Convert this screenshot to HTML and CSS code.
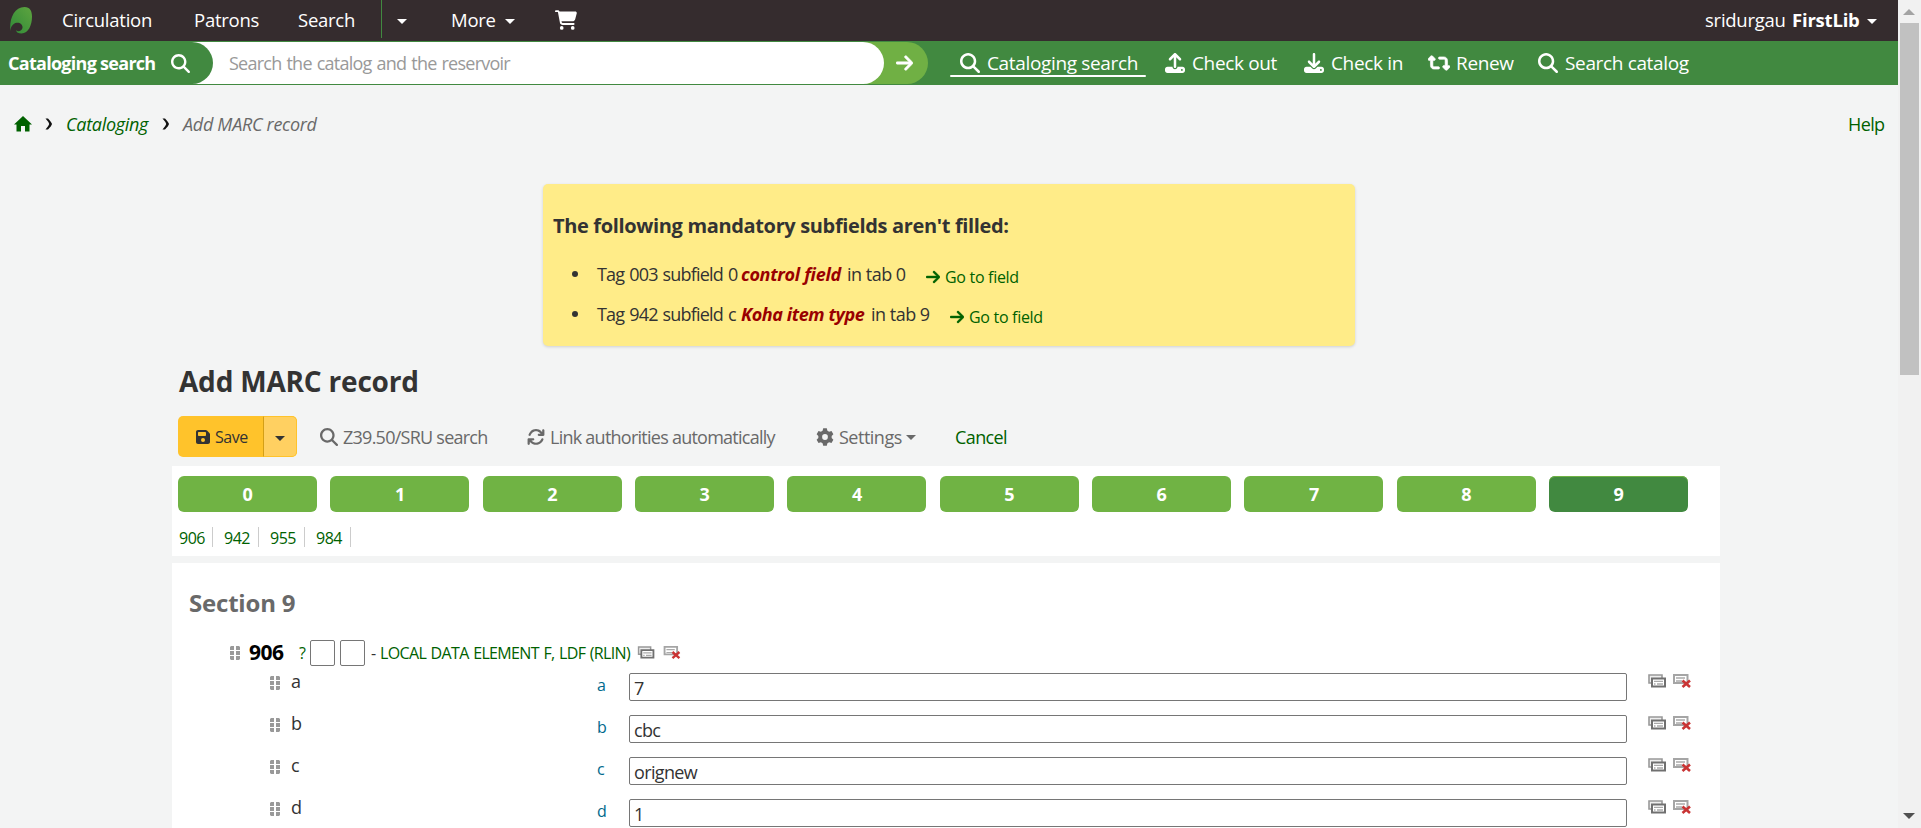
FILE: index.html
```html
<!DOCTYPE html>
<html lang="en">
<head>
<meta charset="utf-8">
<title>Add MARC record</title>
<link rel="stylesheet" href="styles.css">
</head>
<body>
<svg class="defs" aria-hidden="true">
  <symbol id="i-search" viewBox="0 0 512 512"><path d="M416 208c0 45.9-14.9 88.3-40 122.7L502.6 457.4c12.5 12.5 12.5 32.8 0 45.3s-32.8 12.5-45.3 0L330.7 376c-34.4 25.2-76.8 40-122.7 40C93.1 416 0 322.9 0 208S93.1 0 208 0S416 93.1 416 208zM208 352a144 144 0 1 0 0-288 144 144 0 1 0 0 288z"/></symbol>
  <symbol id="i-arrow" viewBox="0 0 448 512"><path stroke="currentColor" stroke-width="14" d="M438.600 278.600c12.500-12.500 12.500-32.800 0-45.300l-160-160c-12.500-12.500-32.800-12.500-45.300 0s-12.500 32.800 0 45.300L338.800 224 32 224c-17.700 0-32 14.300-32 32s14.300 32 32 32l306.700 0L233.400 393.400c-12.500 12.500-12.500 32.800 0 45.300s32.800 12.500 45.300 0l160-160z"/></symbol>
  <symbol id="i-cart" viewBox="0 0 576 512"><path d="M24 0C10.700 0 0 10.700 0 24S10.700 48 24 48H69.500c3.800 0 7.100 2.700 7.900 6.500l51.600 271c6.500 34 36.200 58.500 70.700 58.500H488c13.300 0 24-10.700 24-24s-10.700-24-24-24H199.700c-11.500 0-21.400-8.200-23.600-19.500L170.700 288H459.200c32.600 0 61.100-21.800 69.500-53.300l41-152.300C576.600 57 557.400 32 531.100 32H120.100C111 12.800 91.600 0 69.500 0H24zM176 512a48 48 0 1 0 0-96 48 48 0 1 0 0 96zM464 512a48 48 0 1 0 0-96 48 48 0 1 0 0 96z"/></symbol>
  <symbol id="i-out" viewBox="0 0 512 512"><path fill-rule="evenodd" d="M288 109.300V352c0 17.700-14.300 32-32 32s-32-14.300-32-32V109.300l-73.400 73.400c-12.500 12.500-32.800 12.500-45.300 0s-12.500-32.800 0-45.300l128-128c12.500-12.500 32.800-12.500 45.300 0l128 128c12.500 12.500 12.500 32.800 0 45.300s-32.800 12.500-45.300 0L288 109.300zM64 352H192c0 35.300 28.700 64 64 64s64-28.700 64-64H448c35.300 0 64 28.700 64 64v32c0 35.300-28.700 64-64 64H64c-35.300 0-64-28.700-64-64V416c0-35.300 28.700-64 64-64zM432 456a24 24 0 1 0 0-48 24 24 0 1 0 0 48z"/></symbol>
  <symbol id="i-in" viewBox="0 0 512 512"><path fill-rule="evenodd" d="M288 32c0-17.700-14.300-32-32-32s-32 14.300-32 32V274.700l-73.400-73.400c-12.500-12.500-32.800-12.500-45.300 0s-12.500 32.800 0 45.300l128 128c12.500 12.500 32.800 12.500 45.300 0l128-128c12.500-12.500 12.500-32.800 0-45.300s-32.800-12.500-45.300 0L288 274.700V32zM64 352c-35.300 0-64 28.700-64 64v32c0 35.300 28.700 64 64 64H448c35.300 0 64-28.700 64-64V416c0-35.300-28.700-64-64-64H346.500l-45.300 45.300c-25 25-65.500 25-90.500 0L165.500 352H64zm368 56a24 24 0 1 1 0 48 24 24 0 1 1 0-48z"/></symbol>
  <symbol id="i-renew" viewBox="0 0 576 512"><path stroke="currentColor" stroke-width="16" d="M272 416c17.700 0 32-14.300 32-32s-14.300-32-32-32H160c-17.700 0-32-14.300-32-32V192h32c12.900 0 24.600-7.800 29.600-19.800s2.200-25.700-6.900-34.900l-64-64c-12.500-12.500-32.800-12.500-45.300 0l-64 64c-9.200 9.200-11.900 22.900-6.900 34.900S19.100 192 32 192H64V320c0 53 43 96 96 96H272zM304 96c-17.700 0-32 14.300-32 32s14.300 32 32 32H416c17.700 0 32 14.300 32 32V320H416c-12.900 0-24.600 7.800-29.600 19.800s-2.200 25.700 6.900 34.900l64 64c12.500 12.500 32.800 12.500 45.300 0l64-64c9.200-9.200 11.900-22.900 6.900-34.900s-16.600-19.800-29.600-19.800H512V192c0-53-43-96-96-96H304z"/></symbol>
  <symbol id="i-home" viewBox="0 0 18 16"><path d="M9 0 18 8.500H15.500V15.500H11V10H7V15.500H2.500V8.500H0z"/></symbol>
  <symbol id="i-save" viewBox="0 0 448 512"><path fill-rule="evenodd" d="M64 32C28.700 32 0 60.700 0 96V416c0 35.300 28.700 64 64 64H384c35.300 0 64-28.700 64-64V173.300c0-17-6.700-33.300-18.700-45.300L352 50.700C340 38.700 323.700 32 306.700 32H64zm0 96c0-17.700 14.300-32 32-32H288c17.700 0 32 14.300 32 32v64c0 17.700-14.300 32-32 32H96c-17.700 0-32-14.300-32-32V128zM224 288a64 64 0 1 1 0 128 64 64 0 1 1 0-128z"/></symbol>
  <symbol id="i-sync" viewBox="0 0 512 512"><path d="M105.100 202.600c7.700-21.800 20.200-42.300 37.800-59.800c62.500-62.500 163.800-62.500 226.300 0L386.300 160H336c-17.700 0-32 14.300-32 32s14.300 32 32 32H463.500c17.700 0 32-14.300 32-32V64c0-17.700-14.300-32-32-32s-32 14.300-32 32v51.200L414.400 97.600c-87.500-87.500-229.300-87.500-316.800 0C73.200 122 55.600 150.700 44.800 181.400c-5.900 16.700 2.900 34.900 19.500 40.800s34.900-2.900 40.800-19.500zM16 319.600V448c0 17.700 14.300 32 32 32s32-14.300 32-32V396.900l17.600 17.500c87.500 87.400 229.300 87.400 316.700 0c24.400-24.400 42.100-53.100 52.900-83.700c5.900-16.700-2.900-34.900-19.500-40.800s-34.900 2.900-40.800 19.500c-7.700 21.800-20.200 42.300-37.800 59.800c-62.500 62.500-163.800 62.500-226.300 0L125.600 352H176c17.700 0 32-14.300 32-32s-14.300-32-32-32H48.400c-17 0-32.400 14-32.400 31.600z"/></symbol>
  <symbol id="i-gear" viewBox="-10 -10 20 20"><path fill-rule="evenodd" d="M-2-9.600H2L2.700-7 4.600-5.900 7.200-6.600 9.300-3 7.400-1.100V1.100L9.300 3 7.200 6.600 4.600 5.900 2.700 7 2 9.600H-2L-2.700 7-4.600 5.900-7.200 6.600-9.300 3-7.400 1.100V-1.100L-9.300-3-7.200-6.600-4.600-5.900-2.700-7zM0-3.200A3.200 3.200 0 1 0 0 3.200 3.200 3.200 0 1 0 0-3.200z"/></symbol>
  <symbol id="i-chev" viewBox="0 0 8 12"><path d="M.5.500H3Q6.500 4 7 6 6.500 8 3 11.500H.5Q3.800 8 4.200 6 3.800 4 .5.500z"/></symbol>
  <symbol id="i-grip" viewBox="0 0 10 14"><path d="M1 0h3v4H0V1zM6 0H9l1 1v3H6zM0 5h4v4H0zM6 5H10v4H6zM0 10h4v4H1l-1-1zM6 10H10v3l-1 1H6z"/></symbol>
  <symbol id="i-clone" viewBox="0 0 18 14"><path d="M1 1H14V9H1z" fill="#eee" stroke="#999" stroke-width="1.600"/><path d="M4 4.500H17V12.500H4z" fill="#fff" stroke="#707070" stroke-width="2"/><path d="M6 7.300H15M6 10H7.500M9 10H15" stroke="#aaa" stroke-width="1.300"/></symbol>
  <symbol id="i-del" viewBox="0 0 18 14"><path d="M1 1H14.500V9H1z" fill="#fff" stroke="#a5a5a5" stroke-width="2"/><path d="M3 4H12M3 7H9" stroke="#aaa" stroke-width="1.300"/><path d="M9.500 6.500 17 13M17 6.500 9.500 13" stroke="#c93434" stroke-width="2.600"/></symbol>
</svg>

<div class="page">
<div class="main">
  <header class="topnav">
    <svg class="logo" viewBox="0 0 22 27"><defs><linearGradient id="leaf" x1="1" y1="0" x2="0" y2="1"><stop offset="0" stop-color="#5ea43f"/><stop offset="1" stop-color="#2f8a38"/></linearGradient></defs><path fill="url(#leaf)" d="M.3 24C-.8 12 4 0 14.500 0 20 0 22 4 22 9.500 22 18 18.500 26.500 11.500 26.500 8.500 26.500 6.200 25.200 6 23.200 8 24.800 11 24.500 12.300 21.500 13.500 18 10 15 6.500 15.800 3 16.500.8 19.500.3 24z"/></svg>
    <a>Circulation</a><a>Patrons</a><a>Search</a>
    <span class="split"><i class="caret"></i></span>
    <a>More</a><i class="caret"></i>
    <svg class="cart"><use href="#i-cart"/></svg>
    <span class="user">sridurgau</span><b class="lib">FirstLib</b><i class="caret"></i>
  </header>

  <div class="searchbar">
    <div class="field">
      <div class="mode"><b>Cataloging search</b><svg><use href="#i-search"/></svg></div>
      <span class="placeholder">Search the catalog and the reservoir</span>
    </div>
    <div class="go"><svg><use href="#i-arrow"/></svg></div>
    <nav class="tabs">
      <a class="current"><svg><use href="#i-search"/></svg>Cataloging search</a>
      <a><svg><use href="#i-out"/></svg>Check out</a>
      <a><svg><use href="#i-in"/></svg>Check in</a>
      <a class="wide"><svg><use href="#i-renew"/></svg>Renew</a>
      <a><svg><use href="#i-search"/></svg>Search catalog</a>
    </nav>
  </div>

  <div class="crumbs">
    <svg class="home"><use href="#i-home"/></svg><svg class="chev"><use href="#i-chev"/></svg>
    <a>Cataloging</a><svg class="chev"><use href="#i-chev"/></svg><span>Add MARC record</span>
    <a class="help">Help</a>
  </div>

  <section class="alert">
    <h4>The following mandatory subfields aren't filled:</h4>
    <ul>
      <li><span class="t1">Tag 003 subfield 0</span><em class="e1">control field</em><span class="t2">in tab 0</span><svg><use href="#i-arrow"/></svg><a>Go to field</a></li>
      <li><span class="t1">Tag 942 subfield c</span><em class="e2">Koha item type</em><span class="t2">in tab 9</span><svg><use href="#i-arrow"/></svg><a>Go to field</a></li>
    </ul>
  </section>

  <h1>Add MARC record</h1>
  <div class="toolbar">
    <div class="save"><div class="save-main"><svg><use href="#i-save"/></svg>Save</div><div class="save-drop"><i class="caret"></i></div></div>
    <a class="z"><svg><use href="#i-search"/></svg>Z39.50/SRU search</a>
    <a class="link"><svg><use href="#i-sync"/></svg>Link authorities automatically</a>
    <a class="set"><svg><use href="#i-gear"/></svg><span>Settings</span><i class="caret"></i></a>
    <a class="cancel">Cancel</a>
  </div>

  <section class="panel tabpanel">
    <div class="numtabs"><b>0</b><b>1</b><b>2</b><b>3</b><b>4</b><b>5</b><b>6</b><b>7</b><b>8</b><b class="on">9</b></div>
    <div class="taglinks"><a>906</a><a>942</a><a>955</a><a>984</a></div>
  </section>

  <section class="panel section">
    <h3>Section 9</h3>
    <div class="tag">
      <svg class="grip"><use href="#i-grip"/></svg><b>906</b><a class="q">?</a><span class="ind"></span><span class="ind"></span>
      <span class="dash">-</span><a class="name">LOCAL DATA ELEMENT F, LDF (RLIN)</a>
      <svg class="act"><use href="#i-clone"/></svg><svg class="act"><use href="#i-del"/></svg>
    </div>
    <div class="sub"><svg class="grip"><use href="#i-grip"/></svg><span>a</span><a>a</a><div class="input">7</div><svg class="act"><use href="#i-clone"/></svg><svg class="act"><use href="#i-del"/></svg></div>
    <div class="sub"><svg class="grip"><use href="#i-grip"/></svg><span>b</span><a>b</a><div class="input">cbc</div><svg class="act"><use href="#i-clone"/></svg><svg class="act"><use href="#i-del"/></svg></div>
    <div class="sub"><svg class="grip"><use href="#i-grip"/></svg><span>c</span><a>c</a><div class="input">orignew</div><svg class="act"><use href="#i-clone"/></svg><svg class="act"><use href="#i-del"/></svg></div>
    <div class="sub"><svg class="grip"><use href="#i-grip"/></svg><span>d</span><a>d</a><div class="input">1</div><svg class="act"><use href="#i-clone"/></svg><svg class="act"><use href="#i-del"/></svg></div>
  </section>
</div>
<div class="scroll"><i class="up"></i><div class="thumb"></div><i class="down"></i></div>
</div>
</body>
</html>
```
FILE: styles.css
```css
* { box-sizing: border-box; }
body { margin: 0; height: 828px; overflow: hidden; background: #f3f4f4; color: #333; font: 18px/26px "Open Sans", "Noto Sans", sans-serif; letter-spacing: -.5px; white-space: nowrap; }
svg { display: block; fill: currentColor; flex: none; }
.defs { position: absolute; width: 0; height: 0; }
a { color: #006100; }
.page { display: grid; grid-template-columns: 1898px 23px; height: 828px; overflow: hidden; }
.main { height: 828px; overflow: hidden; }
.caret { width: 0; height: 0; border: 5px solid transparent; border-top-color: currentColor; border-bottom: 0; flex: none; }

.topnav { height: 41px; padding-bottom: 1px; background: #352c2e; color: #fff; display: grid; align-items: center; padding-left: 10px; font-size: 18.5px; letter-spacing: -.25px;
  grid-template-columns: 52px 132px 104px 83px 70px 54px 50px 1150px 87px 75px 10px; }
.topnav a { color: #fff; }
.topnav .caret { margin-top: 3px; }
.logo { width: 22px; height: 27px; }
.split { border-left: 1px solid #418940; height: 38px; align-self: start; padding: 16px 0 0 15px; }
.split .caret { display: block; }
.cart { width: 22px; height: 20px; }
.lib { letter-spacing: -.2px; }

.searchbar { height: 44px; background: #418940; border: solid #418940; border-width: 1px 0; display: flex; color: #fff; }
.field { width: 884px; background: #fff; border-radius: 0 21px 21px 0; display: flex; align-items: center; position: relative; z-index: 1; }
.mode { width: 213px; height: 42px; background: #418940; border-radius: 0 21px 21px 0; padding-left: 8px; display: grid; grid-template-columns: 163px 19px; align-items: center; letter-spacing: -.72px; }
.mode svg { width: 19px; height: 19px; }
.placeholder { color: #999; margin-left: 16px; letter-spacing: -.75px; word-spacing: 1px; }
.go { width: 65px; margin-left: -21px; background: #70b044; border-radius: 0 21px 21px 0; padding-left: 33px; display: flex; align-items: center; }
.go svg { width: 17px; height: 20px; }
.tabs { display: grid; grid-template-columns: 205px 139px 124px 110px 150px; align-items: center; padding-left: 32px; font-size: 19px; letter-spacing: -.35px; }
.tabs a { color: #fff; display: grid; grid-template-columns: 27px auto; align-items: center; height: 28px; }
.tabs svg { width: 20px; height: 20px; }
.tabs .wide { grid-template-columns: 28px auto; }
.tabs .wide svg { width: 22px; }
.tabs .current { position: relative; }
.tabs .current::after { content: ""; position: absolute; left: -10px; bottom: 0; width: 196px; height: 2px; background: #fff; border-radius: 1px; }

.crumbs { height: 77px; display: grid; grid-template-columns: 31px 21px 96px 21px 1665px auto; align-items: center; padding-left: 14px; font-style: italic; letter-spacing: -.3px; }
.crumbs span { color: #696969; }
.home { width: 18px; height: 16px; color: #006100; }
.chev { width: 8px; height: 12px; color: #111; }
.help { font-style: normal; letter-spacing: -.6px; }

.alert { width: 812px; height: 162px; margin: 22px 0 0 543px; padding: 21px 0 0 10px; background: #ffec88; border-radius: 5px; box-shadow: 0 1px 3px rgba(0,0,0,.15); }
h4 { margin: 0 0 8px; font-size: 20px; line-height: 41px; letter-spacing: -.35px; }
ul { margin: 0; padding: 0; }
li { height: 40px; display: flex; align-items: center; }
li::before { content: ""; width: 6px; height: 6px; border-radius: 3px; background: #333; margin: 0 19px; }
.t1 { width: 144px; letter-spacing: -.8px; word-spacing: 1px; }
em { color: #900; font-weight: 700; letter-spacing: -.3px; }
.e1 { width: 106px; }
.e2 { width: 130px; letter-spacing: -.4px; }
.t2 { width: 79px; }
li svg { width: 14px; height: 16px; margin-right: 5px; color: #006100; position: relative; top: 3px; }
li a { font-size: 16px; letter-spacing: -.3px; position: relative; top: 3px; }

h1 { margin: 19px 0 0 179px; font-size: 28px; line-height: 33px; letter-spacing: -.2px; }
.toolbar { height: 41px; margin: 18px 0 9px 178px; display: grid; grid-template-columns: 142px 207px 289px 140px auto; align-items: center; }
.toolbar a { color: #696969; display: flex; align-items: center; padding-top: 1px; letter-spacing: -.75px; }
.toolbar a svg { width: 18px; height: 18px; margin-right: 5px; }
.toolbar .cancel { color: #006100; margin-left: -1px; letter-spacing: -.6px; }
.toolbar .set { letter-spacing: -.5px; }
.set span { width: 67px; }
.save { width: 119px; height: 41px; display: flex; border-radius: 5px; background: #ffc32b; overflow: hidden; font-size: 16px; color: #333; }
.save-main { width: 85px; padding-left: 18px; display: flex; align-items: center; }
.save-main svg { width: 14px; height: 16px; margin-right: 5px; }
.save-drop { width: 34px; border: 1px solid #ffc32b; border-left-color: #d49f16; background: #ffd061; border-radius: 0 5px 5px 0; display: flex; align-items: center; padding: 3px 0 0 11px; }

.panel { width: 1548px; margin-left: 172px; background: #fff; }
.tabpanel { height: 90px; padding: 10px 32px 0 6px; }
.numtabs { display: grid; grid-template-columns: repeat(10, 139px); justify-content: space-between; }
.numtabs b { height: 36px; line-height: 36px; border-radius: 6px; background: #70b344; color: #fff; text-align: center; }
.numtabs .on { background: #418940; box-shadow: inset 0 1px #70b344; }
.taglinks { display: flex; margin-top: 15px; font-size: 16px; }
.taglinks a { width: 46px; height: 20px; line-height: 22px; padding-left: 11px; border-right: 1px solid #ccc; }
.taglinks a:first-child { width: 35px; padding-left: 1px; }

.section { height: 265px; margin-top: 7px; padding-top: 22px; overflow: hidden; }
h3 { margin: 0 0 0 17px; font-size: 24px; line-height: 36px; color: #696969; letter-spacing: -.2px; }
.tag { height: 26px; margin: 18px 0 0 58px; display: grid; align-items: center; grid-template-columns: 19px 50px 11px 30px 31px 9px 257px 26px 26px; font-size: 16px; }
.tag b { font-size: 21px; line-height: 24px; padding-bottom: 2px; color: #000; }
.tag .act { height: 13px; }
.q, .name { padding-top: 1px; }
.name { letter-spacing: -.65px; word-spacing: 1px; }
.grip { width: 10px; height: 14px; color: #999; }
.ind { width: 25px; height: 26px; border: 1px solid #767676; border-radius: 2px; }
.act { width: 18px; height: 14px; }
.sub { height: 28px; margin: 8px 0 14px 98px; display: grid; grid-template-columns: 21px 306px 32px 1019px 25px 25px; align-items: start; }
.sub .grip { margin-top: 3px; }
.sub .act { margin-top: 1px; }
.sub span { line-height: 16px; }
.sub a { font-size: 16px; line-height: 24px; color: #00698c; }
.input { width: 998px; height: 28px; line-height: 28px; border: 1px solid #767676; border-radius: 2px; padding-left: 4px; letter-spacing: -.65px; }
.sub + .sub { margin-top: 14px; }

.scroll { background: #f1f1f1; display: flex; flex-direction: column; padding-left: 2px; }
.up { width: 0; border: 6px solid transparent; border-bottom-color: #a3a3a3; border-top: 0; margin: 9px 0 8px 3px; }
.thumb { width: 19px; height: 352px; background: #c1c1c1; }
.down { width: 0; border: 6px solid transparent; border-top-color: #505050; border-bottom: 0; margin: auto 0 9px 3px; }
```
